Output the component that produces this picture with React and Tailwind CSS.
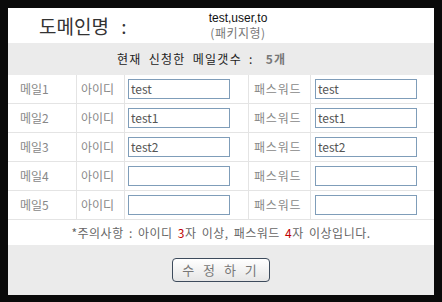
import React from "react";

const rows = [
  { n: 1, id: "test", pw: "test" },
  { n: 2, id: "test1", pw: "test1" },
  { n: 3, id: "test2", pw: "test2" },
  { n: 4, id: "", pw: "" },
  { n: 5, id: "", pw: "" },
];

function Field({ value }) {
  return (
    <div className="h-[20px] w-[102px] border border-[#7f9db9] bg-white pl-[2px] text-[12px] leading-[18px] text-[#555]">
      {value}
    </div>
  );
}

export default function App() {
  return (
    <div
      className="w-[442px] h-[302px] bg-[#0a0a0a] pt-2 pl-2 pr-2 pb-[7px]"
      style={{ fontFamily: '"Noto Sans CJK KR", "Noto Sans", sans-serif' }}
    >
      <div className="flex h-full flex-col bg-white">
        {/* header */}
        <div className="flex h-[35px] items-center">
          <div className="ml-[31px] w-[159px] text-[19px] leading-none text-[#333]">
            도메인명 <span className="ml-[8px]">:</span>
          </div>
          <div className="flex w-[80px] flex-col items-center gap-[1px] text-[12px]">
            <span
              className="block leading-[14px] text-[#111]"
              style={{ fontFamily: '"Liberation Sans", Arial, sans-serif' }}
            >
              test,user,to
            </span>
            <span className="block leading-[14px] tracking-[0.5px] text-[#777]">(패키지형)</span>
          </div>
        </div>
        {/* band */}
        <div className="flex h-[32px] items-center bg-[#ebebeb] pl-[109px] text-[12px] text-[#222]">
          <span className="tracking-[1.3px] [word-spacing:3px]">
            현재 신청한 메일갯수 :
            <span className="ml-[12px] font-bold text-[#777]">5개</span>
          </span>
        </div>
        {/* table */}
        <div className="flex flex-col">
          {rows.map((r) => (
            <div
              key={r.n}
              className="grid h-[29px] grid-cols-[69px_48px_124px_62px_1fr] border-b border-[#e4e4e4] text-[12px] text-[#888]"
            >
              <div className="flex items-center border-r border-[#e4e4e4] pl-[12px]">메일{r.n}</div>
              <div className="flex items-center border-r border-[#e4e4e4] pl-[4px]">아이디</div>
              <div className="flex items-center border-r border-[#e4e4e4] pl-[3px]">
                <Field value={r.id} />
              </div>
              <div className="flex items-center border-r border-[#e4e4e4] pl-[5px] tracking-[0.8px]">패스워드</div>
              <div className="flex items-center pl-[4px]">
                <Field value={r.pw} />
              </div>
            </div>
          ))}
        </div>
        {/* note */}
        <div className="flex h-[25px] items-center justify-center text-[12px] text-[#666]">
          <span className="tracking-[0.5px] [word-spacing:2px]">
            *주의사항 : 아이디 <span className="text-[#c00000]">3</span>자 이상, 패스워드{" "}
            <span className="text-[#c00000]">4</span>자 이상입니다.
          </span>
        </div>
        {/* footer */}
        <div className="flex flex-1 items-start justify-center bg-[#ebebeb] pt-[13px]">
          <button className="h-[24px] w-[98px] rounded-[4px] border border-[#3d4b5c] bg-gradient-to-b from-white to-[#e6e6e6] text-[13px] tracking-[3px] text-[#777]">
            수 정 하 기
          </button>
        </div>
      </div>
    </div>
  );
}
